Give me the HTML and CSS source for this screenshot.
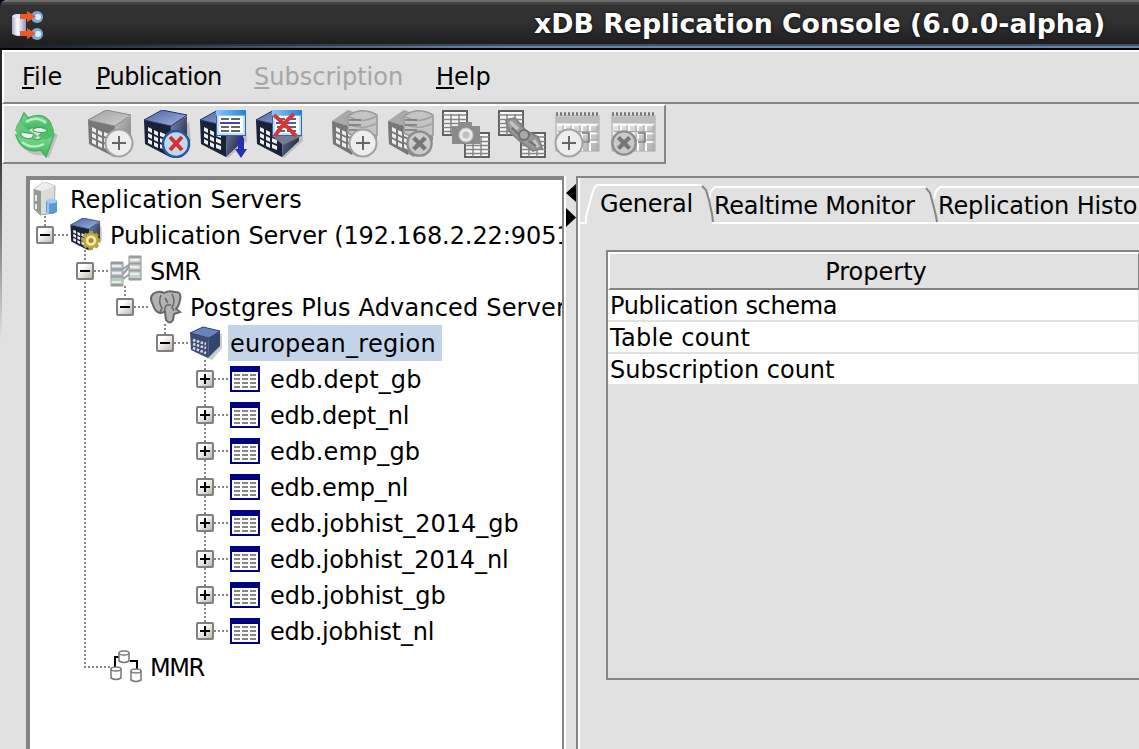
FILE: index.html
```html
<!DOCTYPE html>
<html lang="en">
<head>
<meta charset="utf-8">
<title>xDB Replication Console</title>
<link rel="stylesheet" href="styles.css">
</head>
<body>
<svg class="defs" width="0" height="0">
  <defs>
    <linearGradient id="blueTop" x1="0" y1="0" x2="1" y2="1"><stop offset="0" stop-color="#4c66a4"/><stop offset="1" stop-color="#a0b2e6"/></linearGradient>
    <linearGradient id="blueSide" x1="0" y1="0" x2="1" y2="1"><stop offset="0" stop-color="#7c8db8"/><stop offset="1" stop-color="#10162c"/></linearGradient>
    <linearGradient id="grayTop" x1="0" y1="0" x2="1" y2="1"><stop offset="0" stop-color="#a0a0a0"/><stop offset="1" stop-color="#d2d2d2"/></linearGradient>
    <linearGradient id="graySide" x1="0" y1="0" x2="1" y2="1"><stop offset="0" stop-color="#c4c4c4"/><stop offset="1" stop-color="#777"/></linearGradient>
    <linearGradient id="winTop" x1="0" y1="0" x2="1" y2="0"><stop offset="0" stop-color="#8cc6f8"/><stop offset="1" stop-color="#2780d8"/></linearGradient>
    <linearGradient id="box" x1="0" y1="0" x2="1" y2="1"><stop offset="0.3" stop-color="#fff"/><stop offset="1" stop-color="#b9b2a4"/></linearGradient>
    <linearGradient id="green" x1="0" y1="0" x2="0" y2="1"><stop offset="0" stop-color="#7fdb93"/><stop offset="1" stop-color="#3cb45f"/></linearGradient>
    <linearGradient id="cyl" x1="0" y1="0" x2="1" y2="0"><stop offset="0" stop-color="#a9a8cc"/><stop offset="0.4" stop-color="#fff"/><stop offset="1" stop-color="#9292c0"/></linearGradient>
    <linearGradient id="cal" x1="0" y1="0" x2="1" y2="1"><stop offset="0" stop-color="#eee"/><stop offset="1" stop-color="#b4b4b4"/></linearGradient>
    <g id="cells">
      <path d="M4 17l4 2v4l-4-2zM10 20l4 2v4l-4-2zM16 22l5 2v4l-5-2zM4 23l4 2v4l-4-2zM10 26l4 2v4l-4-2zM16 28l5 2v4l-5-2zM4 29l4 2v4l-4-2zM10 32l4 2v4l-4-2zM16 34l5 2v4l-5-2z"/>
    </g>
    <symbol id="cubeBlue" viewBox="0 0 48 48">
      <path d="M8 38L28 48L47 31L45 12z" fill="#777" opacity=".35"/>
      <path d="M0 10L27 16L26 47L1 34z" fill="#1a2238"/>
      <path d="M27 15L43 6L43 31L26 47z" fill="url(#blueSide)"/>
      <path d="M0 10L18 0L43 5L27 16z" fill="url(#blueTop)" stroke="#26345e"/>
      <use href="#cells" fill="#eee"/>
    </symbol>
    <symbol id="cubeGray" viewBox="0 0 48 48">
      <path d="M0 10L27 16L26 47L1 34z" fill="#777"/>
      <path d="M27 15L43 6L43 31L26 47z" fill="url(#graySide)"/>
      <path d="M0 10L18 0L43 5L27 16z" fill="url(#grayTop)" stroke="#8b8b8b"/>
      <use href="#cells" fill="#eee"/>
    </symbol>
    <symbol id="stackGray" viewBox="0 0 48 48">
      <path d="M0 11L16 0L25 3L30 0L44 4L45 30L26 47L1 34z" fill="url(#graySide)"/>
      <path d="M0 11L20 17L20 45L1 34z" fill="#777"/>
      <path d="M0 11L16 0L28 5L20 17z" fill="#aaa"/>
      <use href="#cells" fill="#eee"/>
      <path d="M16 6Q30-4 45 5V25Q30 31 16 23z" fill="#c4c4c4" stroke="#999" stroke-width="1.500"/>
      <path d="M17 14Q31 21 45 13M17 7Q31 14 45 6" stroke="#a2a2a2" stroke-width="1.500" fill="none"/>
      <path d="M17 10h12M17 15h12M17 20h12" stroke="#777" stroke-width="1.500"/>
    </symbol>
    <symbol id="plusBadge" viewBox="0 0 30 30">
      <circle cx="15" cy="15" r="13.500" fill="#ededed" stroke="#a2a2a2" stroke-width="2"/>
      <path d="M15 8v14M8 15h14" stroke="#666" stroke-width="2"/>
    </symbol>
    <symbol id="xBadgeGray" viewBox="0 0 30 30">
      <circle cx="15" cy="15" r="12.500" fill="#cacaca" stroke="#8d8d8d" stroke-width="2.500"/>
      <path d="M9 9L21 21M21 9L9 21" stroke="#777" stroke-width="4.500"/>
    </symbol>
    <symbol id="window" viewBox="0 0 30 26">
      <rect x=".5" y=".5" width="29" height="25" fill="#c4dff8" stroke="#2a66ae"/>
      <rect width="30" height="5.500" fill="url(#winTop)"/>
      <rect x="3" y="6" width="24" height="17" fill="#fff"/>
      <path d="M5 9h8M15 9h9M5 17h8M15 17h9M5 21h8M15 21h9" stroke="#333" stroke-width="1.600"/>
      <path d="M4 13h20" stroke="#4840c0" stroke-width="1.800"/>
    </symbol>
    <symbol id="gridGray" viewBox="0 0 26 26">
      <rect x="1" y="1" width="24" height="24" fill="#f7f7f7" stroke="#626262" stroke-width="2"/>
      <path d="M1 5h24M1 9.500h24M1 13.500h24M1 17.500h24M1 21.500h24M9 4v21M17 4v21" stroke="#858585" stroke-width="1.500"/>
    </symbol>
    <symbol id="calendar" viewBox="0 0 46 40">
      <rect x="2" y="4" width="43" height="35" fill="url(#cal)" stroke="#aaa"/>
      <path d="M2 2h44" stroke="#777" stroke-width="3.500" stroke-dasharray="2 2"/>
      <rect x="2" y="5" width="43" height="6" fill="#bcbcbc"/>
      <path d="M3 13h41M3 21.500h41M3 30h41M11 13v26M19 13v26M28 13v26M36 13v26" stroke="#fafafa" stroke-width="2"/>
      <path d="M4 19.500h39M4 28h38M9 13v26M17 13v26M26 13v26M34 13v26M43 13v26" stroke="#aaa" stroke-width="1"/>
      <path d="M28 21h7v9h-7" stroke="#777" stroke-width="1.500" fill="none"/>
    </symbol>
    <symbol id="table" viewBox="0 0 30 26">
      <rect width="30" height="26" fill="#000080"/><rect x="2" y="6" width="26" height="18" fill="#fff"/>
      <path d="M4 9h22M4 13h22M4 17h22M4 21h22" stroke="#858585" stroke-width="2" stroke-dasharray="6 2"/>
    </symbol>
    <symbol id="minus" viewBox="0 0 18 18"><rect x="1" y="1" width="16" height="16" rx="1" fill="url(#box)" stroke="#808080" stroke-width="2"/><path d="M4 9h10" stroke="#000" stroke-width="2"/></symbol>
    <symbol id="plus" viewBox="0 0 18 18"><rect x="1" y="1" width="16" height="16" rx="1" fill="url(#box)" stroke="#808080" stroke-width="2"/><path d="M4 9h10M9 4v10" stroke="#000" stroke-width="2"/></symbol>
  </defs>
</svg>

<div class="window">
  <header class="titlebar">
    <svg class="app-icon" width="32" height="30" viewBox="0 0 32 30">
      <path d="M0 5Q7 1 14 5V23Q7 27 0 23z" fill="url(#cyl)"/>
      <ellipse cx="7" cy="5" rx="6.500" ry="2" fill="#e6e6f6"/>
      <circle cx="25" cy="6" r="6" fill="#7ea8dc"/><circle cx="26" cy="6" r="3" fill="#dcecff"/>
      <circle cx="25" cy="23" r="6" fill="#7ea8dc"/><circle cx="26" cy="23" r="3" fill="#dcecff"/>
      <path d="M8 3h7V0l9 5.500L15 11V8H8zM8 20h7v-3l9 5.500L15 28v-3H8z" fill="#ee5a22"/>
    </svg>
    <span class="title">xDB Replication Console (6.0.0-alpha)</span>
  </header>

  <nav class="menubar">
    <span class="m-file"><u>F</u>ile</span>
    <span class="m-pub"><u>P</u>ublication</span>
    <span class="m-sub disabled"><u>S</u>ubscription</span>
    <span class="m-help"><u>H</u>elp</span>
  </nav>

  <div class="toolbar">
    <svg class="tool refresh" width="48" height="48" viewBox="0 0 48 48">
      <path d="M14 41Q26 46 32 44L36 47L45 24L42 22z" fill="#999" opacity=".45"/>
      <path d="M3 19L11 2L15 7Q31 0 38 13L38 19L24 18Q19 15 15 19z" fill="url(#green)" stroke="#4cae66" stroke-width="1.500"/>
      <path d="M3 24L21 28Q26 30 30 26L41 24L33 46L28 39Q9 43 3 24z" fill="url(#green)" stroke="#4cae66" stroke-width="1.500"/>
      <path d="M3 20Q2 14 7 10L13 17L25 25L20 29L5 27z" fill="#62c97b"/>
      <path d="M30 18L38 13Q42 18 41 25L32 29L25 25z" fill="#4fbf6c"/>
      <path d="M8 21L21 23L19 27Q12 29 8 24z" fill="#edf1ed" stroke="#3e9e57"/>
      <path d="M20 18Q28 14 35 20Q29 23 20 20z" fill="#e8f0e8" stroke="#3e9e57"/>
      <path d="M13 11Q24 4 33 12M9 31Q19 39 31 33" fill="none" stroke="#b5efc0" stroke-width="2.500"/>
    </svg>
    <svg class="tool gap" width="48" height="48" viewBox="0 0 48 48"><use href="#cubeGray" width="48" height="48"/><use href="#plusBadge" x="16" y="18" width="30" height="30"/></svg>
    <svg class="tool" width="48" height="48" viewBox="0 0 48 48"><use href="#cubeBlue" width="48" height="48"/><circle cx="32" cy="34" r="13" fill="#bfd8f2" stroke="#2a5799" stroke-width="2.500"/><path d="M26 27L38 40M38 27L26 40" stroke="#d92f2b" stroke-width="4"/></svg>
    <svg class="tool" width="48" height="48" viewBox="0 0 48 48"><use href="#cubeBlue" width="48" height="48"/><use href="#window" x="16" y="0" width="30" height="26"/><path d="M38 28h6v11h3L41 48L35 39h3z" fill="#2231b2"/></svg>
    <svg class="tool" width="48" height="48" viewBox="0 0 48 48"><use href="#cubeBlue" width="48" height="48"/><use href="#window" x="16" y="0" width="30" height="26"/><path d="M16 26L46 26L27 35z" fill="#737b90"/><path d="M18 5Q30 15 40 26M38 4Q27 13 19 26" stroke="#d83634" stroke-width="4" fill="none"/></svg>
    <svg class="tool gap2" width="48" height="48" viewBox="0 0 48 48"><use href="#stackGray" width="48" height="48"/><use href="#plusBadge" x="16" y="18" width="30" height="30"/></svg>
    <svg class="tool" width="48" height="48" viewBox="0 0 48 48"><use href="#stackGray" width="48" height="48"/><use href="#xBadgeGray" x="17" y="19" width="29" height="29"/></svg>
    <svg class="tool near" width="48" height="48" viewBox="0 0 48 48"><use href="#gridGray" width="26" height="26"/><use href="#gridGray" x="22" y="22" width="26" height="26"/><path d="M10 16h7v-4h13v4h8v18H10z" fill="#8b8b8b"/><circle cx="24" cy="25" r="7" fill="#e8e8e8" stroke="#c4c4c4"/><circle cx="24" cy="25" r="3.500" fill="#c0c0c0"/></svg>
    <svg class="tool" width="48" height="48" viewBox="0 0 48 48"><use href="#gridGray" width="26" height="26"/><use href="#gridGray" x="22" y="22" width="26" height="26"/><path d="M8 10L17 8L28 21L40 27L44 38L35 41L23 32L11 21z" fill="#999" stroke="#838383" stroke-width="2"/><path d="M12 12L20 19M36 30L40 37" stroke="#c4c4c4" stroke-width="3"/><circle cx="26" cy="25" r="5" fill="#a8a8a8" stroke="#707070" stroke-width="2"/><path d="M14 18l7 7M31 31l7 5" stroke="#727272" stroke-width="2"/></svg>
    <svg class="tool" width="48" height="48" viewBox="0 0 48 48"><use href="#calendar" y="2" width="46" height="40"/><use href="#plusBadge" y="18" width="30" height="30"/></svg>
    <svg class="tool" width="48" height="48" viewBox="0 0 48 48"><use href="#calendar" y="2" width="46" height="40"/><use href="#xBadgeGray" y="19" width="28" height="28"/></svg>
  </div>

  <main class="main">
    <section class="tree">
      <svg class="lines" width="240" height="500" viewBox="30 180 240 500">
        <path d="M45 216V226M54 235H70M85 250V666M94 271H110M84 667H110M125 286V298M134 307H148M165 324V334M174 343H190M205 360V630M214 379H230M214 415H230M214 451H230M214 487H230M214 523H230M214 559H230M214 595H230M214 631H230" fill="none" stroke="#858585" stroke-width="2" stroke-dasharray="2 2"/>
      </svg>
      <div class="row root">
        <svg class="ico" width="32" height="34" viewBox="0 0 32 34"><path d="M4 7L14 0L25 4L24 31L10 33L4 27z" fill="#dadcd8" stroke="#a5a9a5"/><path d="M4 7L11 9V33L4 27z" fill="#969a96"/><path d="M4 7L14 0L25 4L12 9z" fill="#eceeeb"/><path d="M6 13v6M6 22v5" stroke="#eee" stroke-width="2"/><path d="M16 19Q21 15 27 19V30Q21 34 16 30z" fill="#5b98d7"/><ellipse cx="21.500" cy="19" rx="5.500" ry="2.500" fill="#a4caef"/><path d="M18 21v10" stroke="#a1c8ec" stroke-width="2"/></svg>
        <span class="label">Replication Servers</span>
      </div>
      <div class="row d1">
        <svg class="exp" width="18" height="18"><use href="#minus" width="18" height="18"/></svg>
        <svg class="ico" width="32" height="34" viewBox="0 0 32 34"><use href="#cubeBlue" width="34" height="33" preserveAspectRatio="none"/><path d="M21 13v19M11.500 22.500h19M14.300 15.800l13.400 13.400M27.700 15.800L14.300 29.200" stroke="#ae982b" stroke-width="4"/><circle cx="21" cy="22.500" r="6.500" fill="#f2e9a8" stroke="#bca738" stroke-width="2.500"/><circle cx="21" cy="22.500" r="2.500" fill="#a68f2b"/></svg>
        <span class="label tight">Publication Server (192.168.2.22:9051</span>
      </div>
      <div class="row d2">
        <svg class="exp" width="18" height="18"><use href="#minus" width="18" height="18"/></svg>
        <svg class="ico" width="32" height="34" viewBox="0 0 32 34"><path d="M13 20L20 12M13 25L20 20M13 15L20 10" stroke="#9b9da3" stroke-width="2"/><path d="M1 8h12v24H1z" fill="#bfc2cf" stroke="#9698a4"/><path d="M19 2h12v24H19z" fill="#cbd1cc" stroke="#8f9791"/><path d="M1 25h12v7H1z" fill="#b2cfb6"/><path d="M1 9h12M1 15.500h12M1 22.500h12M1 31h12M19 3h12M19 9.500h12M19 16.500h12M19 25h12" stroke="#979c9e" stroke-width="2"/><path d="M2 12h9M2 19h9M2 28h9M20 6h9M20 13h9M20 20h9" stroke="#e9eeec" stroke-width="2"/></svg>
        <span class="label smr">SMR</span>
      </div>
      <div class="row d3">
        <svg class="exp" width="18" height="18"><use href="#minus" width="18" height="18"/></svg>
        <svg class="ico" width="32" height="34" viewBox="0 0 32 34"><path d="M3 4Q8 0 14 3Q19 0 24 2Q32 1 30 10Q29 16 26 19L30 22L24 24L23 30Q20 35 16 30L15 22L10 23Q5 22 3 15Q-1 8 3 4z" fill="#b3b3b3" stroke="#676767" stroke-width="2"/><path d="M11 5Q8 12 12 18L10 22M22 4Q26 12 22 17L24 21M15 22Q14 17 17 15L21 15M15 8L18 13" fill="none" stroke="#666" stroke-width="1.500"/></svg>
        <span class="label ppas">Postgres Plus Advanced Server</span>
      </div>
      <div class="row d4">
        <svg class="exp" width="18" height="18"><use href="#minus" width="18" height="18"/></svg>
        <svg class="ico" width="32" height="34" viewBox="0 0 32 34"><path d="M4 26L22 34L32 22V7L23 13z" fill="#999" opacity=".5"/><path d="M0 7L19 12L18 32L1 24z" fill="#3f4d73"/><path d="M19 12L30 5V20L18 32z" fill="#344669"/><path d="M0 7L13 1L30 5L19 12z" fill="#6784ba" stroke="#2e3e66"/><path d="M3 14l13 4M3 18l13 4M3 22l13 5" stroke="#d8dce5" stroke-width="2.500" stroke-dasharray="2.500 1.500"/></svg>
        <span class="label selected">european_region</span>
      </div>
      <div class="row d5"><svg class="exp" width="18" height="18"><use href="#plus" width="18" height="18"/></svg><svg class="ico tbl" width="30" height="26"><use href="#table" width="30" height="26"/></svg><span class="label gb">edb.dept_gb</span></div>
      <div class="row d5"><svg class="exp" width="18" height="18"><use href="#plus" width="18" height="18"/></svg><svg class="ico tbl" width="30" height="26"><use href="#table" width="30" height="26"/></svg><span class="label nl">edb.dept_nl</span></div>
      <div class="row d5"><svg class="exp" width="18" height="18"><use href="#plus" width="18" height="18"/></svg><svg class="ico tbl" width="30" height="26"><use href="#table" width="30" height="26"/></svg><span class="label gb">edb.emp_gb</span></div>
      <div class="row d5"><svg class="exp" width="18" height="18"><use href="#plus" width="18" height="18"/></svg><svg class="ico tbl" width="30" height="26"><use href="#table" width="30" height="26"/></svg><span class="label nl">edb.emp_nl</span></div>
      <div class="row d5"><svg class="exp" width="18" height="18"><use href="#plus" width="18" height="18"/></svg><svg class="ico tbl" width="30" height="26"><use href="#table" width="30" height="26"/></svg><span class="label">edb.jobhist_2014_gb</span></div>
      <div class="row d5"><svg class="exp" width="18" height="18"><use href="#plus" width="18" height="18"/></svg><svg class="ico tbl" width="30" height="26"><use href="#table" width="30" height="26"/></svg><span class="label tight">edb.jobhist_2014_nl</span></div>
      <div class="row d5"><svg class="exp" width="18" height="18"><use href="#plus" width="18" height="18"/></svg><svg class="ico tbl" width="30" height="26"><use href="#table" width="30" height="26"/></svg><span class="label">edb.jobhist_gb</span></div>
      <div class="row d5"><svg class="exp" width="18" height="18"><use href="#plus" width="18" height="18"/></svg><svg class="ico tbl" width="30" height="26"><use href="#table" width="30" height="26"/></svg><span class="label nl">edb.jobhist_nl</span></div>
      <div class="row mmr-row">
        <svg class="ico" width="32" height="34" viewBox="0 0 32 34"><path d="M5 17V7h5M20 11h7v8" fill="none" stroke="#000" stroke-width="2"/><g fill="#fff" stroke="#777" stroke-width="1.500"><path d="M9 3v8q5 3 10 0V3"/><ellipse cx="14" cy="3" rx="5" ry="2"/><path d="M1 19v9q5 3 10 0V19"/><ellipse cx="6" cy="19" rx="5" ry="2"/><path d="M21 21v9q5 3 10 0V21"/><ellipse cx="26" cy="21" rx="5" ry="2"/></g></svg>
        <span class="label mmr">MMR</span>
      </div>
    </section>

    <div class="divider">
      <svg width="10" height="43" viewBox="0 0 10 43"><path d="M10 0V18L0 9zM0 24V43L10 33.500z" fill="#000"/></svg>
    </div>

    <section class="detail">
      <div class="tabs">
        <svg class="tab-edges" width="559" height="46" viewBox="580 178 559 46">
          <path d="M580 223H586V217L591 198L594 188L597 185H702M712 223H1139M709 199L711 191L715 187H926M934 199L936 191L940 187H1139" fill="none" stroke="#fff" stroke-width="2"/>
          <path d="M702 186L706 190L709 200L712 214L713 222M926 188L930 193L933 204L936 216L937 222" fill="none" stroke="#858585" stroke-width="2"/>
        </svg>
        <span class="tab t1">General</span>
        <span class="tab t2">Realtime Monitor</span>
        <span class="tab t3">Replication Histo</span>
      </div>
      <div class="table">
        <div class="th">Property</div>
        <div class="td r1">Publication schema</div>
        <div class="td r2">Table count</div>
        <div class="td r3">Subscription count</div>
      </div>
    </section>
  </main>
</div>
</body>
</html>
```
FILE: styles.css
```css
* { box-sizing: border-box; }
html, body { margin: 0; height: 100%; overflow: hidden; }
html { background: #060a28; }
body { font: 24px/36px "DejaVu Sans", sans-serif; color: #000; }
.defs { position: absolute; }
svg { display: block; flex: none; }
.window { width: 1139px; height: 749px; overflow: hidden; display: flex; flex-direction: column; white-space: nowrap;
  background: linear-gradient(#26272c, #26272c 140px, #e1e1e1 340px) 0 0 / 2px 100% no-repeat, #e1e1e1; border-top-left-radius: 8px; }

.titlebar { height: 50px; flex: none; display: flex; align-items: flex-start; padding: 0 0 0 12px; border-top: 2px solid #6b6b6b; border-bottom: 2px solid #000;
  background: linear-gradient(90deg, #1b1e22, #6685ae 45%) 0 100% / 100% 2px no-repeat, linear-gradient(90deg, #1b1e22, #405066 45%) 0 100% / 100% 4px no-repeat, linear-gradient(#444 0 2px, #323232 3px, #303030 45%, #1b1b1b); }
.app-icon { margin-top: 9px; }
.title { margin-left: 490px; color: #fff; font-size: 26.750px; font-weight: bold; line-height: 44px; text-shadow: 0 0 3px #000; }

.menubar { height: 54px; flex: none; display: flex; padding-left: 18px; line-height: 51px; border-left: 2px solid #fff; border-top: 2px solid #fff; border-bottom: 2px solid #858585; margin-left: 2px; }
.menubar u { text-decoration-thickness: 2px; text-underline-offset: 2px; text-decoration-skip-ink: none; }
.m-file { width: 74px; }
.m-pub { width: 158px; letter-spacing: -0.550px; }
.m-sub { width: 182px; }
.disabled { color: #a6a6a6; }

.toolbar { width: 664px; height: 60px; flex: none; margin-left: 2px; display: flex; gap: 8px; padding: 4px 0 0 8px; border-left: 2px solid #fff; border-top: 2px solid #fff; border-right: 2px solid #858585; border-bottom: 2px solid #858585; }
.tool.refresh { margin-left: 1px; margin-right: -1px; margin-top: 1px; }
.tool.gap { margin-left: 20px; }
.tool.gap2 { margin-left: 20px; }
.tool.near { margin-left: -2px; }

.main { flex: 1; min-height: 0; display: flex; padding: 12px 0 0 26px; }
.tree { position: relative; width: 538px; border: solid #858585; border-width: 4px 2px 0 4px; background: #fff; overflow: hidden; padding-top: 1px; }
.lines { position: absolute; left: 0; top: 0; }
.row { position: relative; display: flex; align-items: center; height: 36px; }
.label { padding-top: 1px; height: 36px; }
.ico { width: 32px; margin-right: 8px; }
.tbl { width: 30px; margin-right: 10px; }
.exp { margin-right: 16px; }
.d1 { padding-left: 6px; }
.d2 { padding-left: 46px; }
.d3 { padding-left: 86px; }
.d4 { padding-left: 126px; }
.d5 { padding-left: 166px; }
.mmr-row { padding-left: 80px; }
.tight { letter-spacing: -0.080px; }
.gb { letter-spacing: 0.150px; }
.nl { letter-spacing: -0.200px; }
.smr { letter-spacing: -0.800px; }
.ppas { letter-spacing: 0.170px; }
.mmr { letter-spacing: -1.500px; }
.selected { background: #c3d4e8; margin-left: -2px; padding: 0 4px 0 2px; width: 214px; line-height: 38px; letter-spacing: 0.270px; }
.divider { width: 12px; border-left: 2px solid #fff; padding-top: 8px; }

.detail { flex: 1; min-width: 0; border-top: 2px solid #858585; border-left: 2px solid #858585; box-shadow: inset 2px 0 #fff; overflow: hidden; }
.tabs { position: relative; height: 46px; display: flex; margin-left: 2px; }
.tab-edges { position: absolute; left: 0; top: 0; }
.tab { position: relative; flex: none; padding-top: 10px; }
.t1 { padding: 8px 0 0 20px; width: 134px; letter-spacing: -0.250px; }
.t2 { width: 224px; letter-spacing: -0.270px; }
.t3 { letter-spacing: -0.150px; }
.table { margin: 26px 0 0 28px; height: 430px; border: solid #858585; border-width: 2px 0 2px 2px; }
.th { height: 38px; border-top: 2px solid #fff; border-left: 2px solid #fff; border-bottom: 2px solid #858585; border-right: 1px solid #858585; text-align: center; line-height: 36px; padding-left: 4px; }
.td { height: 32px; line-height: 32px; padding-left: 2px; background: linear-gradient(#fff, #fff) 0 0 / 100% 30px no-repeat; margin-right: 1px; }
.r1 { letter-spacing: -0.330px; }
.r2 { letter-spacing: 0.250px; }
```
